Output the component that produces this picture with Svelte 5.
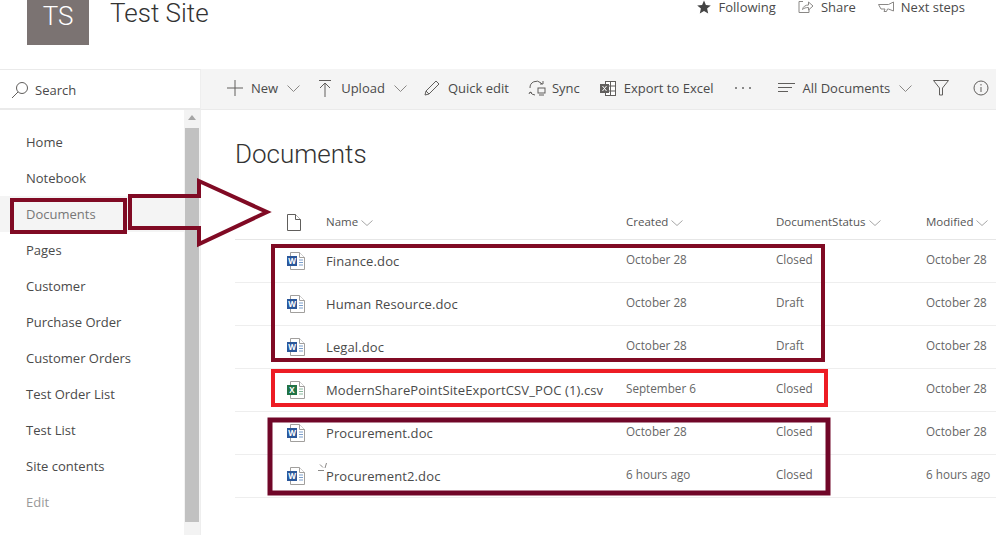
<script lang="ts">
  const nav = ["Home", "Notebook", "Documents", "Pages", "Customer", "Purchase Order", "Customer Orders", "Test Order List", "Test List", "Site contents", "Edit"];

  const rows = [
    { name: "Finance.doc", created: "October 28", status: "Closed", modified: "October 28", kind: "word" },
    { name: "Human Resource.doc", created: "October 28", status: "Draft", modified: "October 28", kind: "word" },
    { name: "Legal.doc", created: "October 28", status: "Draft", modified: "October 28", kind: "word" },
    { name: "ModernSharePointSiteExportCSV_POC (1).csv", created: "September 6", status: "Closed", modified: "October 28", kind: "excel" },
    { name: "Procurement.doc", created: "October 28", status: "Closed", modified: "October 28", kind: "word" },
    { name: "Procurement2.doc", created: "6 hours ago", status: "Closed", modified: "6 hours ago", kind: "word", fresh: true },
  ];
</script>

{#snippet chevron()}
  <svg class="chev" width="13" height="7" viewBox="0 0 13 7"><path d="M.5.5l6 6 6-6" fill="none" stroke="#8a8886"/></svg>
{/snippet}

{#snippet small()}
  <svg class="chev-sm" width="12" height="6" viewBox="0 0 12 6"><path d="M.5.5l5.500 5 5.500-5" fill="none" stroke="#a6a6a6"/></svg>
{/snippet}

<div class="page">
  <header class="top">
    <div class="brand">
      <div class="logo">TS</div>
      <div class="title">Test Site</div>
    </div>
    <div class="actions">
      <span class="action">
        <svg width="14" height="14" viewBox="0 0 14 14"><path d="M7 .5l1.900 4.500 4.900.4-3.700 3.200 1.100 4.800L7 10.900l-4.200 2.500 1.100-4.800L.2 5.400l4.900-.4z" fill="#444"/></svg>
        Following
      </span>
      <span class="action">
        <svg width="16" height="14" viewBox="0 0 16 14" fill="none" stroke="#8a8886"><path d="M5 1.500H1v11h10V9"/><path d="M4.500 9.500c.5-3 3-4.500 6-4.500V2l4.500 4-4.500 4V7.500c-2.500 0-4.500.5-6 2z"/></svg>
        Share
      </span>
      <span class="action">
        <svg width="16" height="12" viewBox="0 0 16 12" fill="none" stroke="#8a8886"><path d="M.5 3.500h10l5-2.500v9l-5-2H9.500l-1 2.500H6L7 8H3z"/></svg>
        Next steps
      </span>
    </div>
  </header>

  <div class="body">
    <aside class="side">
      <div class="search">
        <svg width="18" height="18" viewBox="0 0 18 18" fill="none" stroke="#605e5c"><circle cx="11" cy="7" r="5.500"/><path d="M7 11l-6 6"/></svg>
        <span>Search</span>
      </div>
      <div class="side-main">
        <nav class="nav">
          {#each nav as item}
            <a class="nav-item" class:selected={item === "Documents"} class:muted={item === "Edit"} href="#top">{item}</a>
          {/each}
        </nav>
        <div class="scrollbar">
          <div class="up"></div>
          <div class="thumb"></div>
        </div>
      </div>
    </aside>

    <main class="main">
      <div class="toolbar">
        <span class="tool new">
          <svg width="16" height="16" viewBox="0 0 16 16"><path d="M8 0v16M0 8h16" stroke="#605e5c"/></svg>
          New {@render chevron()}
        </span>
        <span class="tool upload">
          <svg width="12" height="17" viewBox="0 0 12 17" fill="none" stroke="#605e5c"><path d="M0 .5h12M6 3v14M1 8l5-5 5 5"/></svg>
          Upload {@render chevron()}
        </span>
        <span class="tool edit">
          <svg width="16" height="16" viewBox="0 0 16 16" fill="none" stroke="#605e5c"><path d="M1 15l1-4L12 1l3 3L5 14z"/><path d="M2 11l3 3"/></svg>
          Quick edit
        </span>
        <span class="tool sync">
          <svg width="18" height="16" viewBox="0 0 18 16" fill="none" stroke="#605e5c"><path d="M2 8a6.500 6.500 0 0 1 11-5l1 1M15 1v3h-3"/><path d="M1 14l1-2 2 1M2 12a6.500 6.500 0 0 0 5 3"/><rect x="10" y="8" width="7" height="5"/><path d="M11 15h5"/></svg>
          Sync
        </span>
        <span class="tool">
          <svg width="16" height="15" viewBox="0 0 16 15"><rect x="5.500" y=".5" width="10" height="14" fill="#fff" stroke="#605e5c"/><path d="M5.500 5h10M5.500 10h10M10.500.5v14" stroke="#605e5c"/><rect x="0" y="3" width="9" height="9" fill="#605e5c"/><path d="M2.500 5l4 5M6.500 5l-4 5" stroke="#fff"/></svg>
          Export to Excel
        </span>
        <span class="dots">
          <i></i><i></i><i></i>
        </span>
        <span class="tool views">
          <svg width="17" height="10" viewBox="0 0 17 10"><path d="M0 .5h17M0 4.500h14M0 8.500h10" stroke="#605e5c"/></svg>
          All Documents {@render chevron()}
        </span>
        <svg class="filter" width="16" height="16" viewBox="0 0 16 16" fill="none" stroke="#605e5c"><path d="M.5.500h15L9.500 8v7h-3V8z"/></svg>
        <svg class="info" width="16" height="16" viewBox="0 0 16 16" fill="none" stroke="#605e5c"><circle cx="8" cy="8" r="7"/><path d="M8 7v5M8 4v1.500"/></svg>
      </div>

      <section class="content">
        <h1>Documents</h1>
        <div class="list">
          <div class="row head">
            <span class="icon-cell">
              <svg width="14" height="17" viewBox="0 0 14 17" fill="#fff" stroke="#605e5c"><path d="M.5.500h8l5 5v11H.5z"/><path d="M8.500.5v5h5"/></svg>
            </span>
            <span>Name {@render small()}</span>
            <span>Created {@render small()}</span>
            <span>DocumentStatus {@render small()}</span>
            <span>Modified {@render small()}</span>
          </div>
          {#each rows as row}
            <div class="row">
              <span class="icon-cell">
                <span class="file">
                  <svg class="page-ico" width="15" height="18" viewBox="0 0 15 18" fill="#fff" stroke="#a19f9d"><path d="M.5.500h9l5 5v12H.5z"/><path d="M9.500.5v5h5"/><path class="lines" d="M9 8h4M9 10.500h4M9 13h4" stroke={row.kind === "word" ? "#7b9ecb" : "#88b79c"}/></svg>
                  <span class="badge" class:xl={row.kind === "excel"}>{row.kind === "word" ? "W" : "X"}</span>
                </span>
              </span>
              <span class="name">
                {#if row.fresh}
                  <svg class="fresh" width="10" height="9" viewBox="0 0 10 9" stroke="#8a8886"><path d="M8.500 0L7 5M2 1.500L5 4.500M0 7.500h6"/></svg>
                {/if}
                {row.name}
              </span>
              <span class="cell">{row.created}</span>
              <span class="cell">{row.status}</span>
              <span class="cell">{row.modified}</span>
            </div>
          {/each}
        </div>
      </section>
    </main>
  </div>

  <!-- hand-drawn annotations sitting on top of the screenshot -->
  <svg class="marks" width="996" height="535" viewBox="0 0 996 535" fill="none" stroke="#800a24" stroke-width="4">
    <rect x="12" y="200" width="113" height="32" />
    <path d="M130 196h69v-15l68 31-68 32v-16h-69z" />
    <rect x="273" y="246" width="550" height="114" />
    <rect x="273" y="371" width="553" height="34" stroke="#ed1c24" />
    <rect x="270" y="420" width="558" height="73" stroke-width="5" stroke="#700628" />
  </svg>
</div>

<style>
  :global(body) {
    margin: 0;
    background: #fff;
  }
  .page {
    position: relative;
    width: 996px;
    height: 535px;
    overflow: hidden;
    font-family: "Open Sans", "Noto Sans", sans-serif;
    font-size: 13px;
    color: #4a4a4a;
  }
  .top {
    display: flex;
    justify-content: space-between;
    height: 69px;
    box-sizing: border-box;
    padding: 0 31px 0 27px;
  }
  .brand {
    display: flex;
    align-items: flex-start;
    gap: 21px;
  }
  .logo {
    width: 62px;
    height: 45px;
    box-sizing: border-box;
    padding-top: 1px;
    background: #7b7372;
    color: #fff;
    font-family: Roboto, sans-serif;
    font-size: 26px;
    font-weight: 300;
    line-height: 30px;
    text-align: center;
  }
  .title {
    font-family: Roboto, sans-serif;
    font-size: 26px;
    font-weight: 300;
    line-height: 26px;
    color: #333;
  }
  .actions {
    display: flex;
    gap: 22px;
    line-height: 14px;
  }
  .action {
    display: flex;
    align-items: center;
    gap: 7px;
    height: 14px;
  }
  .action:first-child {
    gap: 8px;
  }
  .body {
    display: flex;
    height: 466px;
  }
  .side {
    display: flex;
    flex-direction: column;
    width: 201px;
    flex: none;
  }
  .search {
    display: flex;
    align-items: center;
    gap: 6px;
    height: 41px;
    box-sizing: border-box;
    padding-left: 11px;
    padding-top: 1px;
    border-top: 1px solid #eaeaea;
    border-bottom: 2px solid #eaeaea;
    border-right: 1px solid #eee;
  }
  .side-main {
    display: flex;
    flex: 1;
    min-height: 0;
  }
  .nav {
    flex: 1;
    display: flex;
    flex-direction: column;
    padding-top: 14px;
  }
  .nav-item {
    display: block;
    height: 36px;
    line-height: 36px;
    padding-left: 26px;
    color: #4a4a4a;
    text-decoration: none;
  }
  .nav-item.selected {
    background: #f4f4f4;
    color: #777;
  }
  .nav-item.muted {
    color: #999;
  }
  .scrollbar {
    width: 16px;
    background: #f3f3f3;
    border-right: 1px solid #eee;
    box-sizing: content-box;
    padding-top: 5px;
  }
  .up {
    width: 0;
    margin: 0 auto 8px;
    border: 4px solid transparent;
    border-top: 0;
    border-bottom: 5px solid #a6a6a6;
  }
  .thumb {
    width: 14px;
    height: 394px;
    margin: 0 auto;
    background: #c1c1c1;
  }
  .main {
    flex: 1;
    min-width: 0;
  }
  .toolbar {
    display: flex;
    align-items: center;
    height: 40px;
    box-sizing: content-box;
    padding-left: 26px;
    background: #f4f4f4;
    border-bottom: 1px solid #eaeaea;
    white-space: nowrap;
    line-height: 18px;
  }
  .tool {
    display: flex;
    align-items: center;
    gap: 8px;
    margin-right: 17px;
    margin-top: -2px;
  }
  .tool svg {
    flex: none;
  }
  .tool.new {
    margin-right: 19px;
  }
  .tool.upload {
    gap: 10px;
  }
  .tool.upload .chev {
    margin-left: -1px;
  }
  .tool.edit {
    margin-right: 19px;
  }
  .tool.sync {
    gap: 6px;
    margin-right: 20px;
  }
  .chev {
    margin-left: 1px;
  }
  .dots {
    display: flex;
    gap: 5px;
    margin: -2px 27px 0 4px;
  }
  .dots i {
    width: 2px;
    height: 2px;
    border-radius: 50%;
    background: #666;
  }
  .views {
    margin-right: 21px;
  }
  .filter {
    margin-right: 24px;
    margin-top: -2px;
    flex: none;
  }
  .info {
    flex: none;
    margin-top: -2px;
  }
  .content {
    padding: 0 0 0 34px;
  }
  h1 {
    margin: 0;
    padding-top: 24px;
    height: 64px;
    box-sizing: border-box;
    font-family: Roboto, sans-serif;
    font-size: 26px;
    line-height: 40px;
    font-weight: 300;
    color: #333;
  }
  .list {
    width: 761px;
    margin-top: 40px;
  }
  .row {
    display: grid;
    grid-template-columns: 91px 300px 150px 150px 70px;
    align-items: center;
    height: 43px;
    box-sizing: border-box;
    border-bottom: 1px solid #eee;
    white-space: nowrap;
  }
  .row.head {
    height: 26px;
    align-items: start;
    font-size: 11.5px;
    color: #555;
    border-bottom-color: #e6e6e6;
  }
  .icon-cell {
    padding-left: 52px;
    line-height: 0;
  }
  .name {
    position: relative;
    letter-spacing: 0.12px;
  }
  .fresh {
    position: absolute;
    left: -8px;
    top: -4px;
  }
  .cell {
    font-size: 11.7px;
    color: #666;
    padding-bottom: 5px;
  }
  .file {
    position: relative;
    display: inline-block;
    width: 18px;
    height: 18px;
  }
  .page-ico {
    position: absolute;
    left: 3px;
    top: 0;
  }
  .badge {
    position: absolute;
    left: 0;
    top: 4px;
    width: 10px;
    height: 10px;
    background: #2b579a;
    color: #fff;
    font-size: 8px;
    font-weight: 700;
    line-height: 10px;
    text-align: center;
  }
  .badge.xl {
    background: #217346;
  }
  .marks {
    position: absolute;
    inset: 0;
    pointer-events: none;
  }
</style>
